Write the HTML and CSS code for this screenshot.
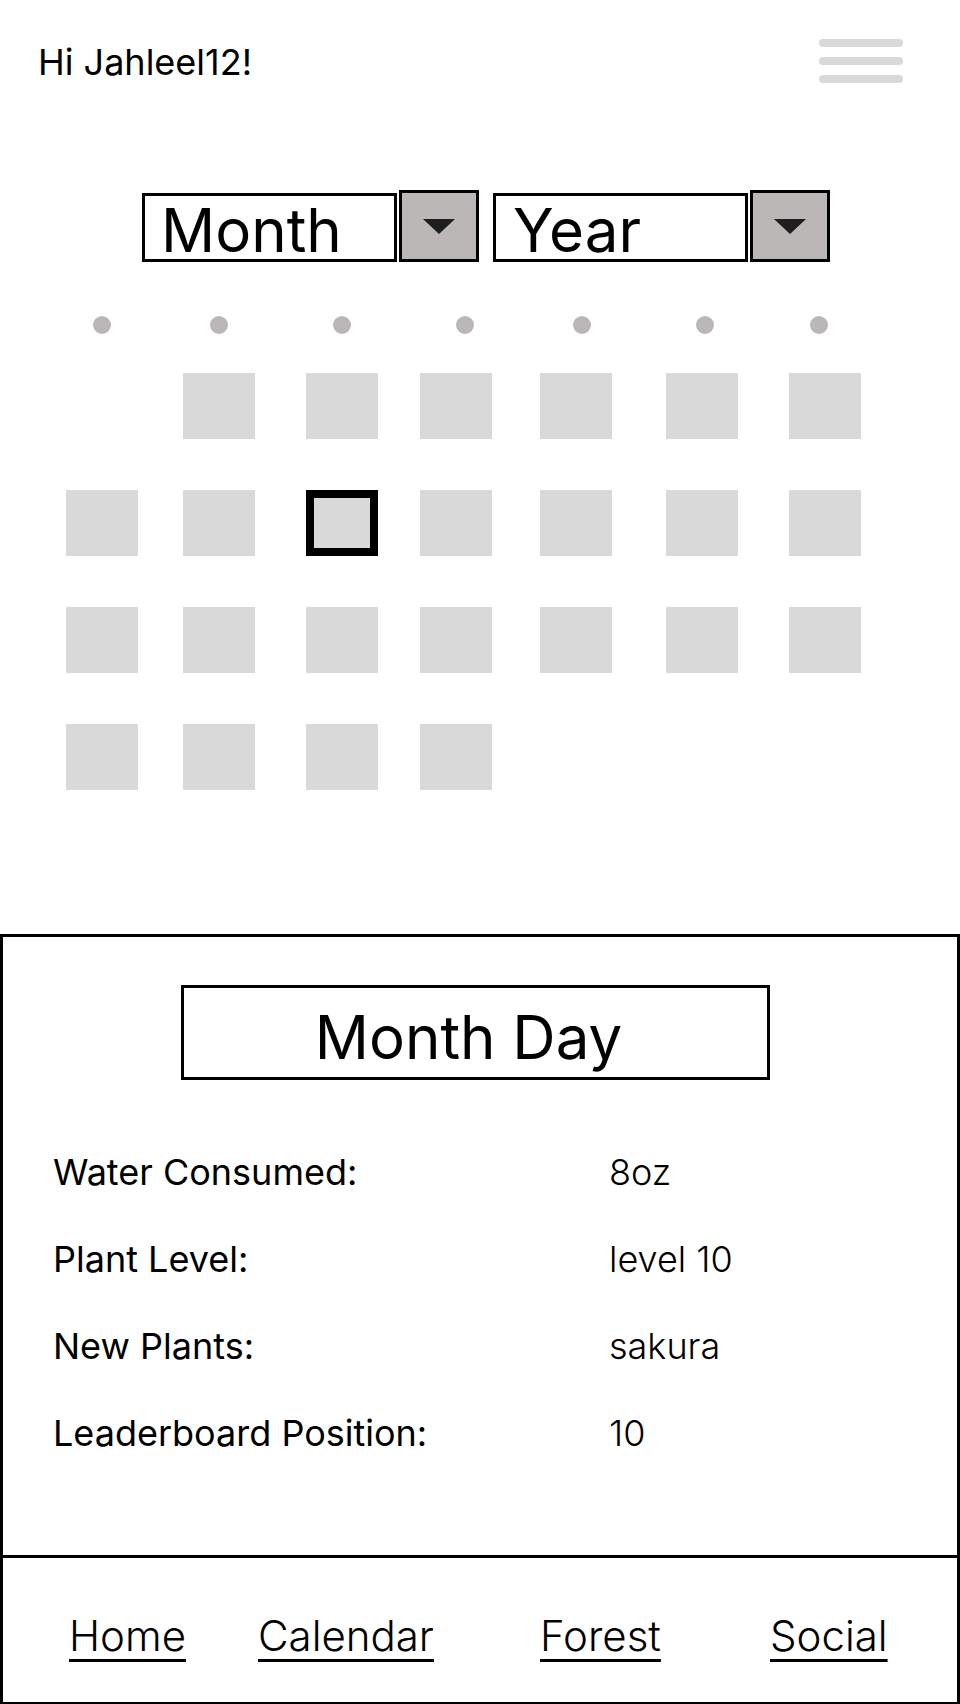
FILE: index.html
```html
<!DOCTYPE html>
<html lang="en">
<head>
<meta charset="utf-8">
<title>Calendar</title>
<link rel="stylesheet" href="styles.css">
</head>
<body>
<div class="page">
  <header class="header">
    <div class="greeting">Hi Jahleel12!</div>
    <div class="menu" aria-label="Menu">
      <span class="menu-bar"></span>
      <span class="menu-bar"></span>
      <span class="menu-bar"></span>
    </div>
  </header>

  <div class="selectors">
    <div class="select">
      <div class="select-field">Month</div>
      <div class="select-button"><span class="caret"></span></div>
    </div>
    <div class="select">
      <div class="select-field select-field-year">Year</div>
      <div class="select-button"><span class="caret"></span></div>
    </div>
  </div>

  <div class="calendar">
    <div class="weekdays">
      <span class="dot"></span><span class="dot"></span><span class="dot"></span><span class="dot"></span><span class="dot"></span><span class="dot"></span><span class="dot"></span>
    </div>
    <div class="days">
      <span class="day day-empty"></span><span class="day"></span><span class="day"></span><span class="day"></span><span class="day"></span><span class="day"></span><span class="day"></span>
      <span class="day"></span><span class="day"></span><span class="day day-selected"></span><span class="day"></span><span class="day"></span><span class="day"></span><span class="day"></span>
      <span class="day"></span><span class="day"></span><span class="day"></span><span class="day"></span><span class="day"></span><span class="day"></span><span class="day"></span>
      <span class="day"></span><span class="day"></span><span class="day"></span><span class="day"></span>
    </div>
  </div>

  <section class="panel">
    <div class="summary">
      <div class="summary-title">Month Day</div>
      <div class="stats">
        <div class="stat-label">Water Consumed:</div><div class="stat-value">8oz</div>
        <div class="stat-label">Plant Level:</div><div class="stat-value">level 10</div>
        <div class="stat-label">New Plants:</div><div class="stat-value">sakura</div>
        <div class="stat-label">Leaderboard Position:</div><div class="stat-value">10</div>
      </div>
    </div>
    <nav class="nav">
      <a class="nav-link" href="#">Home</a>
      <a class="nav-link" href="#">Calendar</a>
      <a class="nav-link" href="#">Forest</a>
      <a class="nav-link" href="#">Social</a>
    </nav>
  </section>
</div>
</body>
</html>
```

FILE: styles.css
```css
* {
  box-sizing: border-box;
}

html, body {
  margin: 0;
  padding: 0;
  background: #ffffff;
}

body {
  font-family: "Inter", "Noto Sans", "Liberation Sans", sans-serif;
  color: #000000;
}

.page {
  width: 960px;
  height: 1704px;
  overflow: hidden;
}

/* Header */
.header {
  display: flex;
  justify-content: space-between;
  align-items: flex-start;
  padding: 39px 57px 0 38px;
}

.greeting {
  margin-top: 1px;
  font-size: 36px;
  line-height: 44px;
  font-weight: 400;
}

.menu {
  display: flex;
  flex-direction: column;
  gap: 10px;
  width: 84px;
}

.menu-bar {
  display: block;
  height: 8px;
  border-radius: 4px;
  background: #d9d9d9;
}

/* Month / Year selectors */
.selectors {
  display: flex;
  align-items: flex-end;
  gap: 14px;
  margin-top: 106px;
  padding-left: 142px;
}

.select {
  display: flex;
  align-items: flex-end;
  gap: 2px;
}

.select-field {
  width: 255px;
  height: 69px;
  border: 3px solid #000000;
  padding: 7px 0 0 16px;
  font-size: 60px;
  line-height: 54px;
  font-weight: 400;
  white-space: nowrap;
}

.select-field-year {
  padding-left: 17px;
}

.select-button {
  width: 80px;
  height: 72px;
  border: 3px solid #000000;
  background: #bbb7b6;
  display: flex;
  align-items: center;
  justify-content: center;
}

.caret {
  width: 0;
  height: 0;
  border-left: 16px solid transparent;
  border-right: 16px solid transparent;
  border-top: 15px solid #1e1e1e;
}

/* Calendar */
.calendar {
  margin-top: 54px;
}

.weekdays {
  display: grid;
  grid-template-columns: 117px 123px 123px 117px 123px 114px 18px;
  padding-left: 93px;
}

.dot {
  display: block;
  width: 18px;
  height: 18px;
  border-radius: 50%;
  background: #bbb7b6;
}

.days {
  display: grid;
  grid-template-columns: 117px 123px 114px 120px 126px 123px 72px;
  grid-auto-rows: 66px;
  row-gap: 51px;
  margin-top: 39px;
  padding-left: 66px;
}

.day {
  display: block;
  width: 72px;
  height: 66px;
  background: #d9d9d9;
}

.day-empty {
  background: transparent;
}

.day-selected {
  border: 8px solid #000000;
}

/* Bottom panel */
.panel {
  margin-top: 144px;
  height: 771px;
  border: 3px solid #000000;
  display: flex;
  flex-direction: column;
}

.summary {
  flex: 1;
  padding-top: 48px;
}

.summary-title {
  width: 589px;
  height: 95px;
  margin-left: 178px;
  border: 3px solid #000000;
  padding: 13px 14px 0 0;
  text-align: center;
  font-size: 60px;
  line-height: normal;
  font-weight: 400;
}

.stats {
  display: grid;
  grid-template-columns: 556px 1fr;
  row-gap: 43px;
  margin-top: 70px;
  padding-left: 50px;
  font-size: 36px;
  line-height: 44px;
}

.stat-label {
  font-weight: 400;
}

.stat-value {
  font-weight: 300;
}

.nav {
  height: 147px;
  border-top: 3px solid #000000;
  display: grid;
  grid-template-columns: 189px 282px 230px 1fr;
  align-items: start;
  padding: 52px 0 0 66px;
}

.nav-link {
  justify-self: start;
  color: #000000;
  font-size: 42px;
  line-height: normal;
  font-weight: 300;
  text-decoration: underline;
  text-decoration-thickness: 3px;
  text-underline-offset: 8px;
}
```
